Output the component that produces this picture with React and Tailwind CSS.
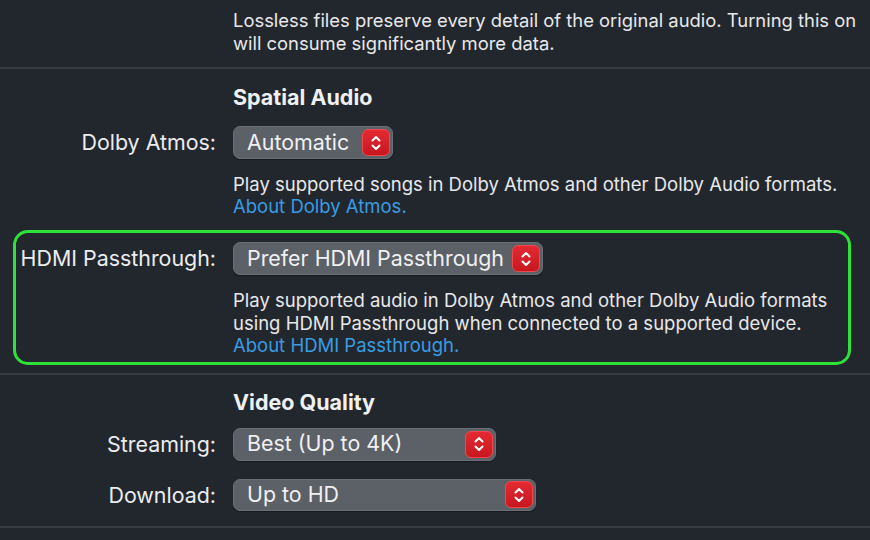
import React from "react";

const Stepper = () => (
  <div className="w-[28px] h-[27px] rounded-[6px] bg-gradient-to-b from-[#e42a33] to-[#c8161f] border border-[#f0484f] flex items-center justify-center">
    <svg width="12" height="18" viewBox="0 0 12 18" fill="none" stroke="#ffffff" strokeWidth="2" strokeLinecap="round" strokeLinejoin="round">
      <path d="M2.5 6.5 L6 3 L9.5 6.5" />
      <path d="M2.5 11.5 L6 15 L9.5 11.5" />
    </svg>
  </div>
);

const Popup = ({ label, width, height = "h-[33px]" }) => (
  <div className={`${width} ${height} rounded-[7px] bg-[#5c6067] border border-[#6a6e75] flex items-center justify-between pl-[13px] pr-[2px] shadow-[0_1px_1px_rgba(0,0,0,0.35)]`}>
    <span className="text-[21.4px] text-[#f0f0f2] leading-none">{label}</span>
    <Stepper />
  </div>
);

const Divider = () => <div className="h-[2px] bg-[#363d45]" />;

const Row = ({ label, labelWidth = "w-[216px]", children }) => (
  <div className="flex items-start">
    <div className={`${labelWidth} shrink-0 h-[33px] flex items-center justify-end text-[21.4px] text-[#ececee]`}>{label}</div>
    <div className="ml-[17px]">{children}</div>
  </div>
);

export default function App() {
  return (
    <div
      className="w-[870px] h-[540px] bg-[#22272e] overflow-hidden text-[#e8e8ea]"
      style={{ fontFamily: "Inter, 'Noto Sans', sans-serif" }}
    >
      <div className="pl-[233px] pt-[9px] pb-[12px] text-[18.4px] leading-[23px] whitespace-nowrap">
        <p>Lossless files preserve every detail of the original audio. Turning this on</p>
        <p>will consume significantly more data.</p>
      </div>
      <Divider />

      <h2 className="pl-[233px] mt-[16px] text-[21.5px] font-bold leading-[24px] text-[#eef0f3]">Spatial Audio</h2>

      <div className="mt-[17px]">
        <Row label="Dolby Atmos:">
          <Popup label="Automatic" width="w-[160px]" />
          <div className="mt-[14px] text-[18.5px] leading-[22px] whitespace-nowrap">
            <p>Play supported songs in Dolby Atmos and other Dolby Audio formats.</p>
            <p className="text-[#3a9be2]">About Dolby Atmos.</p>
          </div>
        </Row>
      </div>

      <div className="ml-[13px] mr-[19px] mt-[13px] border-[3px] border-[#2fe23a] rounded-[15px] pt-[9px] pb-[5px]">
        <Row label="HDMI Passthrough:" labelWidth="w-[200px]">
          <Popup label="Prefer HDMI Passthrough" width="w-[310px]" />
          <div className="mt-[14px] text-[18.5px] leading-[22.5px] whitespace-nowrap">
            <p>Play supported audio in Dolby Atmos and other Dolby Audio formats</p>
            <p>using HDMI Passthrough when connected to a supported device.</p>
            <p className="text-[#3a9be2]">About HDMI Passthrough.</p>
          </div>
        </Row>
      </div>

      <div className="mt-[8px]">
        <Divider />
      </div>

      <h2 className="pl-[233px] mt-[15px] text-[21.5px] font-bold leading-[24px] text-[#eef0f3]">Video Quality</h2>

      <div className="mt-[14px] flex flex-col gap-[18px]">
        <Row label="Streaming:">
          <Popup label="Best (Up to 4K)" width="w-[263px]" />
        </Row>
        <Row label="Download:">
          <Popup label="Up to HD" width="w-[303px]" height="h-[32px]" />
        </Row>
      </div>

      <div className="mt-[14px]">
        <Divider />
      </div>
    </div>
  );
}
